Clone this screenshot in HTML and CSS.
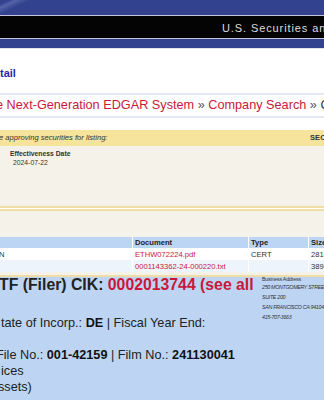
FILE: index.html
```html
<!DOCTYPE html>
<html lang="en">
<head>
    <meta charset="UTF-8">
    <meta name="viewport" content="width=device-width, initial-scale=1.0">
    <title>EDGAR Filing Detail</title>
    <link rel="stylesheet" href="styles.css">
</head>
<body>
    <header class="banner">
        <div class="banner-top"></div>
        <div class="banner-title">U.S. Securities and Exchange Commission</div>
        <div class="banner-bottom"></div>
    </header>

    <div class="page-title">tail</div>

    <nav class="breadcrumb">
        <a href="#">e Next-Generation EDGAR System</a> <span class="sep">»</span> <a href="#">Company Search</a> <span class="sep">»</span> Current Page
    </nav>

    <div class="form-head">
        <span class="form-desc">e approving securities for listing:</span>
        <span class="sec-no">SEC Accession No.</span>
    </div>
    <div class="form-content">
        <div class="info-head">Effectiveness Date</div>
        <div class="info">2024-07-22</div>
    </div>
    <div class="divider"></div>

    <div class="doc-files">
        <table>
            <colgroup>
                <col class="col-desc">
                <col class="col-doc">
                <col class="col-type">
                <col class="col-size">
            </colgroup>
            <thead>
                <tr>
                    <th></th>
                    <th>Document</th>
                    <th>Type</th>
                    <th>Size</th>
                </tr>
            </thead>
            <tbody>
                <tr>
                    <td class="desc">N</td>
                    <td><a href="#">ETHW072224.pdf</a></td>
                    <td>CERT</td>
                    <td>281</td>
                </tr>
                <tr class="alt">
                    <td></td>
                    <td><a href="#">0001143362-24-000220.txt</a></td>
                    <td></td>
                    <td>389</td>
                </tr>
            </tbody>
        </table>
    </div>

    <div class="company">
        <div class="mailer">
            <div class="mailer-head">Business Address</div>
            <span class="mailer-line">250 MONTGOMERY STREET</span>
            <span class="mailer-line">SUITE 200</span>
            <span class="mailer-line">SAN FRANCISCO CA 94104</span>
            <span class="mailer-line">415-707-3663</span>
        </div>
        <div class="company-name">TF (Filer) CIK: <a href="#">0002013744 (see all</a></div>
        <div class="ident">
            <div class="ident-line wrap-after">tate of Incorp.: <strong>DE</strong> | Fiscal Year End:</div>
            <div class="ident-line file-line">File No.: <a href="#"><strong>001-42159</strong></a> | Film No.: <strong>241130041</strong></div>
            <div class="ident-line">ices</div>
            <div class="ident-line assets">ssets)</div>
        </div>
    </div>
</body>
</html>
```

FILE: styles.css
```css
html, body {
    margin: 0;
    overflow: hidden;
}
body {
    width: 324px;
    height: 400px;
    font-family: "Liberation Sans", Arial, sans-serif;
    color: #222;
    background: #fff;
    white-space: nowrap;
}
a {
    color: #c9183a;
    text-decoration: none;
}

/* banner */
.banner-top {
    height: 15px;
    background: linear-gradient(155deg, #33428f 0, #33428f 4px, #5564a6 7px, #33428f 13px, #33428f 100%) no-repeat 0 0 / 30px 15px, #33428f;
    border-bottom: 1px solid #c3c6d8;
}
.banner-title {
    height: 22px;
    padding-left: 222px;
    background: #040404;
    border-bottom: 1px solid #c3c6d8;
    color: #dcdcdc;
    font-size: 11px;
    letter-spacing: 0.9px;
    line-height: 25px;
    overflow: hidden;
}
.banner-bottom {
    height: 9px;
    background: #33428f;
    border-bottom: 1px solid #dfe3f0;
}

.page-title {
    padding-top: 18px;
    font-size: 11px;
    font-weight: bold;
    line-height: 13px;
    color: #1f2c9c;
}

.breadcrumb {
    margin-top: 13px;
    padding: 3px 0;
    border-top: 2px solid #e3eaf3;
    border-bottom: 2px solid #e3eaf3;
    font-size: 12.7px;
    line-height: 15px;
    text-indent: -4px;
    color: #333;
}
.breadcrumb .sep {
    color: #555;
}

/* form */
.form-head {
    display: flex;
    margin-top: 12px;
    height: 16px;
    background: #f6e39c;
    font-size: 7.6px;
    line-height: 16px;
    color: #333;
}
.form-desc {
    flex: 0 0 310px;
    font-style: italic;
    text-indent: -1px;
}
.sec-no {
    font-weight: bold;
}
.form-content {
    box-sizing: border-box;
    height: 60px;
    padding: 3px 0 0 10px;
    background: #f4f2e9;
    font-size: 6.8px;
    line-height: 9px;
    color: #333;
}
.info-head {
    font-weight: bold;
}
.info {
    padding-left: 3px;
}
.divider {
    height: 1px;
    background: #fff;
    border-top: 2px solid #f1dea4;
    border-bottom: 2px solid #f1dea4;
}

/* documents */
.doc-files {
    padding: 26px 0 3px;
    background: #f4f2e9;
}
table {
    table-layout: fixed;
    width: 371px;
    margin-left: -1px;
    border-collapse: separate;
    border-spacing: 1px 0;
    background: #fff;
    font-size: 7.6px;
    color: #333;
}
.col-desc { width: 132px; }
.col-doc { width: 115px; }
.col-type { width: 59px; }
.col-size { width: 60px; }
th, td {
    padding: 0 2px;
    text-align: left;
    overflow: hidden;
}
th {
    height: 11px;
    background: #bdd5f4;
    font-weight: bold;
    color: #222;
}
td {
    height: 12px;
}
td.desc {
    text-indent: -3px;
}
tr.alt td {
    background: #eef4fc;
}

/* company */
.company {
    padding-bottom: 20px;
    background: #bdd5f3;
    border-top: 2px solid #efdca6;
}
.mailer {
    float: right;
    width: 62px;
    font-size: 5.3px;
    letter-spacing: -0.2px;
    line-height: 5px;
    color: #333;
}
.mailer-line {
    display: block;
    font-style: italic;
    letter-spacing: -0.3px;
    line-height: 10px;
}
.company-name {
    font-size: 15.8px;
    font-weight: bold;
    line-height: 15px;
    text-indent: -1px;
    color: #222;
}
.ident {
    margin-top: 22.7px;
    font-size: 12.7px;
    line-height: 16.2px;
    color: #222;
}
.ident strong {
    color: #111;
}
.ident-line {
    text-indent: 1px;
}
.wrap-after {
    margin-bottom: 16.2px;
}
.file-line {
    text-indent: -4px;
}
.assets {
    text-indent: -2px;
}
```
